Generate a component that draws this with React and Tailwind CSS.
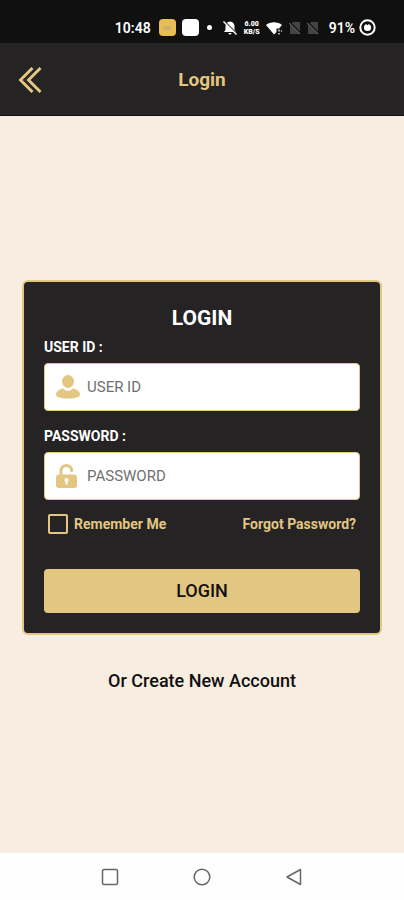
import { useState } from "react";

function StatusBar() {
  return (
    <div className="flex h-[43px] items-center justify-end bg-[#111010] pt-3 pr-7 text-white">
      <span className="text-sm leading-4 font-semibold">10:48</span>
      <span className="ml-2 flex size-[17px] items-center justify-center rounded bg-[#e9bd55]">
        <span className="h-1 w-2 rounded-sm bg-[#cfae67]" />
      </span>
      <span className="ml-1.5 size-[17px] rounded bg-white" />
      <span className="ml-2 size-[5px] rounded-full bg-white" />
      <svg className="ml-2.5" width="16" height="16" viewBox="0 0 16 16" aria-hidden="true">
        <path d="M8 1.500c-2.800.3-4.500 2.300-4.500 4.500v3.800L2 12h12l-1.500-2.200V6c0-2.200-1.700-4.200-4.500-4.500zM6.500 13h3a1.500 1.500 0 0 1-3 0z" fill="#fff" />
        <path d="M2.500 1.500l12 12" stroke="#111010" strokeWidth="1.600" />
        <path d="M1.500 1.500l13 13" stroke="#fff" strokeWidth="1.400" />
      </svg>
      <span className="ml-1 flex w-5 flex-col items-center text-[7px] leading-[8px] font-black">
        <span>6.00</span>
        <span>KB/S</span>
      </span>
      <svg className="ml-1" width="17" height="14" viewBox="0 0 17 14" aria-hidden="true">
        <path d="M0 4C4 .3 12 .3 16 4l-3 3.500h-2.500V11L8 13.500z" fill="#fff" />
        <path d="M13 8.500v2M13 12v1.500M15.500 9.500v1" stroke="#fff" strokeWidth="1.300" />
      </svg>
      {[0, 1].map((sim) => (
        <svg key={sim} className="ml-1.5" width="12" height="14" viewBox="0 0 12 14" aria-hidden="true">
          <path d="M4 1h7v12H1V4z" fill="#444343" />
          <path d="M0 1l12 12" stroke="#111010" strokeWidth="2.400" />
          <path d="M0 2l11 11" stroke="#5d5c5c" strokeWidth="1.200" />
        </svg>
      ))}
      <span className="ml-2.5 text-sm leading-4 font-semibold">91%</span>
      <svg className="ml-1" width="17" height="17" viewBox="0 0 17 17" aria-hidden="true">
        <circle cx="8.500" cy="8.500" r="7.200" fill="none" stroke="#fff" strokeWidth="2" />
        <circle cx="8.500" cy="8.500" r="3.600" fill="#fff" />
        <path d="M8.500 3v3" stroke="#111010" strokeWidth="1.500" />
      </svg>
    </div>
  );
}

function UserIcon() {
  return (
    <svg className="size-6 shrink-0" viewBox="0 0 24 24" fill="#e3c681" aria-hidden="true">
      <ellipse cx="12" cy="6.500" rx="6" ry="6.500" />
      <path d="M7.500 13.500c1.500 1.800 3 2.500 4.500 2.500s3-.7 4.500-2.500c4.500.7 7.500 3 7.500 6 0 2.700-5 4-12 4s-12-1.300-12-4c0-3 3-5.300 7.500-6z" />
    </svg>
  );
}

function LockIcon() {
  return (
    <svg className="size-6 shrink-0" viewBox="0 0 24 24" aria-hidden="true">
      <path d="M5 13V6.500a5.300 5 0 0 1 10.600 0" fill="none" stroke="#e3c681" strokeWidth="3" strokeLinecap="round" />
      <rect x="0" y="10.500" width="21" height="13.500" rx="3" fill="#e3c681" />
      <circle cx="10.500" cy="16" r="2" fill="#fff" />
      <path d="M9.500 16h2v4.500h-2z" fill="#fff" />
    </svg>
  );
}

function Field({ id, label, type, icon, className }) {
  return (
    <div className={className}>
      <label htmlFor={id} className="block text-sm leading-[18px] font-bold text-white">
        {label} :
      </label>
      <div className="mt-[7px] flex h-12 items-center rounded border border-[#e3c681] bg-white pr-3 pl-[11px]">
        {icon}
        <input
          id={id}
          type={type}
          placeholder={label}
          className="ml-[7px] min-w-0 flex-1 bg-transparent text-[15px] text-[#444] outline-none placeholder:text-[#707070]"
        />
      </div>
    </div>
  );
}

export default function App() {
  const [remember, setRemember] = useState(false);

  return (
    <div className="flex min-h-screen flex-col bg-[#f7ede0] font-[Roboto,sans-serif]">
      <StatusBar />
      <header className="grid h-[73px] grid-cols-[1fr_auto_1fr] items-center border-b border-[#111010] bg-[#252324] px-[18px] pt-px">
        <button type="button" aria-label="Back" className="justify-self-start">
          <svg width="24" height="28" viewBox="0 0 24 28" fill="none" stroke="#e3c681" strokeWidth="3" aria-hidden="true">
            <path d="M14.500 2L2.500 14l12 12M22.500 2l-12 12 12 12" />
          </svg>
        </button>
        <h1 className="text-[19px] leading-6 font-bold text-[#e3c681]">Login</h1>
      </header>

      <main className="flex flex-1 flex-col justify-center px-[22px] pt-1">
        <form
          onSubmit={(event) => event.preventDefault()}
          className="rounded-md border-2 border-[#e3c681] bg-[#252324] px-5 pt-6 pb-5"
        >
          <h2 className="text-center text-[21px] leading-6 font-bold text-white">LOGIN</h2>
          <Field id="user-id" label="USER ID" type="text" icon={<UserIcon />} className="mt-2" />
          <Field id="password" label="PASSWORD" type="password" icon={<LockIcon />} className="mt-4" />

          <div className="mt-[14px] flex h-5 items-center justify-between px-1 text-sm font-bold text-[#e3c681]">
            <label className="flex items-center gap-1.5">
              <input
                type="checkbox"
                checked={remember}
                onChange={(event) => setRemember(event.target.checked)}
                className="size-5 appearance-none rounded-xs border-2 border-[#e3c681] checked:bg-[#e3c681]"
              />
              Remember Me
            </label>
            <a href="#forgot">Forgot Password?</a>
          </div>

          <button
            type="submit"
            className="mt-[35px] h-11 w-full rounded bg-[#e3c681] text-lg font-medium text-[#111010]"
          >
            LOGIN
          </button>
        </form>
        <a href="#register" className="mt-[34px] self-center text-lg leading-6 font-medium text-[#111010]">
          Or Create New Account
        </a>
      </main>

      <nav aria-label="System" className="flex h-[47px] items-center justify-center gap-[74px] bg-[#fefefe] text-[#666]">
        <button type="button" aria-label="Recent apps">
          <svg width="18" height="18" viewBox="0 0 18 18" fill="none" stroke="currentColor" strokeWidth="1.500" aria-hidden="true">
            <rect x="1.500" y="1.500" width="15" height="15" rx="1.500" />
          </svg>
        </button>
        <button type="button" aria-label="Home">
          <svg width="18" height="18" viewBox="0 0 18 18" fill="none" stroke="currentColor" strokeWidth="1.500" aria-hidden="true">
            <circle cx="9" cy="9" r="7.800" />
          </svg>
        </button>
        <button type="button" aria-label="Go back">
          <svg width="18" height="18" viewBox="0 0 18 18" fill="none" stroke="currentColor" strokeWidth="1.500" strokeLinejoin="round" aria-hidden="true">
            <path d="M15.500 1.500v15L2 9z" />
          </svg>
        </button>
      </nav>
    </div>
  );
}
